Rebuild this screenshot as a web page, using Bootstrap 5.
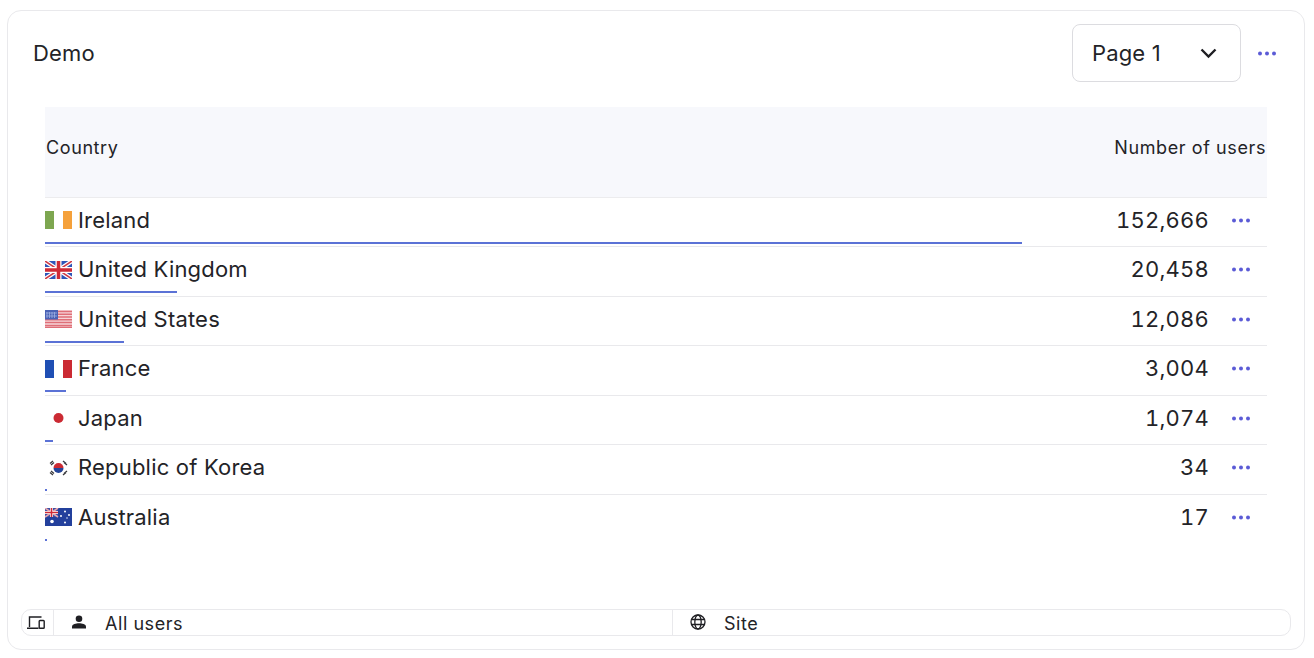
<!doctype html>
<html lang="en"><head><meta charset="utf-8"><title>Demo</title>
<link href="https://cdn.jsdelivr.net/npm/bootstrap@5.3.0/dist/css/bootstrap.min.css" rel="stylesheet">
<style>
html,body{height:658px;overflow:hidden;background:#fff}
body{font-family:Inter,"Liberation Sans",sans-serif;color:#232327;padding:10px 9px 8px 7px}
.panel{height:639.5px;border:1.5px solid #e9e9ec;border-radius:14px;padding:13px 0 12.5px 0;display:flex;flex-direction:column}
.top-bar{height:58px;padding:0 28px 0 25px}
.demo-title{font-size:22px;letter-spacing:.15px;padding-top:1px}
.head-gap{gap:17px}
.page-pick{width:169px;height:57.5px;border:1.5px solid #dcdce0;border-radius:8px;padding:0 23px 0 19px;font-size:22px;letter-spacing:.15px;background:#fff}
.dots{fill:#5b5bd6;display:block}
.grid-wrap{margin:25px 37px 0 37px}
.head-row{height:90.6px;background:#f7f8fc;font-size:18px;letter-spacing:.6px;padding:0 1px 9.6px;border-bottom:1px solid #ececee}
.data-row{height:49.5px;border-bottom:1.5px solid #e9e9ec;font-size:22px;letter-spacing:.2px}
.data-row:last-child{border-bottom:0}
.row-main{height:45.5px;padding-right:17px}
.flag-box{width:27px;height:18px;margin-right:6px;display:block;flex:none}
.num{letter-spacing:.2px;font-variant-numeric:tabular-nums;margin-right:23px}
.bar-line{height:2px;background:#5b72d6;margin-top:-1.5px}
.foot-bar{margin:auto 13px 0 13px;height:27px;border:1.5px solid #e9e9ec;border-radius:10px;font-size:18px;letter-spacing:.55px}
.foot-dev{width:32px;border-right:1.5px solid #e9e9ec;padding-right:3px}
.foot-cell{flex:1 1 0;padding-left:18px;padding-top:2px;line-height:1}
.foot-cell+.foot-cell{border-left:1.5px solid #e9e9ec;padding-left:17px}
.foot-cell svg{margin-right:19px;flex:none;margin-top:-3px}
.foot-cell+.foot-cell svg{margin-right:18px}
</style></head><body>
<div class="panel">
 <div class="top-bar d-flex align-items-center justify-content-between">
  <div class="demo-title">Demo</div>
  <div class="d-flex align-items-center head-gap">
   <div class="page-pick d-flex align-items-center justify-content-between"><span>Page 1</span>
    <svg width="17" height="11" viewBox="0 0 17 11"><path d="M1.500 1.500 8.500 8.500l7-7" fill="none" stroke="#1f1f23" stroke-width="2.400"/></svg></div>
   <svg class="dots" width="18" height="5" viewBox="0 0 18 5"><circle cx="2" cy="2.500" r="2"/><circle cx="9" cy="2.500" r="2"/><circle cx="16" cy="2.500" r="2"/></svg>
  </div>
 </div>
 <div class="grid-wrap">
  <div class="head-row d-flex align-items-center justify-content-between"><span>Country</span><span>Number of users</span></div>

  <div class="data-row">
   <div class="row-main d-flex align-items-center justify-content-between"><div class="d-flex align-items-center">
    <svg class="flag-box" viewBox="0 0 27 18"><rect width="9" height="18" fill="#7da650"/><rect x="18" width="9" height="18" fill="#f5a13b"/></svg>Ireland</div>
    <div class="d-flex align-items-center"><span class="num">152,666</span><svg class="dots" width="18" height="5" viewBox="0 0 18 5"><circle cx="2" cy="2.500" r="2"/><circle cx="9" cy="2.500" r="2"/><circle cx="16" cy="2.500" r="2"/></svg></div></div>
   <div class="bar-line" style="width:977px"></div>
  </div>

  <div class="data-row">
   <div class="row-main d-flex align-items-center justify-content-between"><div class="d-flex align-items-center">
    <svg class="flag-box" viewBox="0 0 27 18"><rect width="27" height="18" fill="#2f55b8"/><path d="M0 0 27 18M27 0 0 18" stroke="#fff" stroke-width="4"/><path d="M0 0 27 18M27 0 0 18" stroke="#cf3a45" stroke-width="1.500"/><path d="M13.500 0v18M0 9h27" stroke="#fff" stroke-width="6"/><path d="M13.500 0v18M0 9h27" stroke="#cf2a36" stroke-width="3.500"/></svg>United Kingdom</div>
    <div class="d-flex align-items-center"><span class="num">20,458</span><svg class="dots" width="18" height="5" viewBox="0 0 18 5"><circle cx="2" cy="2.500" r="2"/><circle cx="9" cy="2.500" r="2"/><circle cx="16" cy="2.500" r="2"/></svg></div></div>
   <div class="bar-line" style="width:132px"></div>
  </div>

  <div class="data-row">
   <div class="row-main d-flex align-items-center justify-content-between"><div class="d-flex align-items-center">
    <svg class="flag-box" viewBox="0 0 27 18"><rect width="27" height="18" fill="#f6d5d8"/><path d="M0 1.400h27M0 4.200h27M0 7h27M0 9.800h27M0 12.600h27M0 15.400h27M0 17.600h27" stroke="#df6f78" stroke-width="1.500"/><rect width="13" height="9.500" fill="#4a62b5"/><path d="M2 2v6M4.500 2v6M7 2v6M9.500 2v6M1 3h11M1 6h11" stroke="#9fb0e2" stroke-width=".8"/></svg>United States</div>
    <div class="d-flex align-items-center"><span class="num">12,086</span><svg class="dots" width="18" height="5" viewBox="0 0 18 5"><circle cx="2" cy="2.500" r="2"/><circle cx="9" cy="2.500" r="2"/><circle cx="16" cy="2.500" r="2"/></svg></div></div>
   <div class="bar-line" style="width:79px"></div>
  </div>

  <div class="data-row">
   <div class="row-main d-flex align-items-center justify-content-between"><div class="d-flex align-items-center">
    <svg class="flag-box" viewBox="0 0 27 18"><rect width="9" height="18" fill="#1f4fb4"/><rect x="18" width="9" height="18" fill="#cb2a33"/></svg>France</div>
    <div class="d-flex align-items-center"><span class="num">3,004</span><svg class="dots" width="18" height="5" viewBox="0 0 18 5"><circle cx="2" cy="2.500" r="2"/><circle cx="9" cy="2.500" r="2"/><circle cx="16" cy="2.500" r="2"/></svg></div></div>
   <div class="bar-line" style="width:21px"></div>
  </div>

  <div class="data-row">
   <div class="row-main d-flex align-items-center justify-content-between"><div class="d-flex align-items-center">
    <svg class="flag-box" viewBox="0 0 27 18"><circle cx="13.500" cy="9" r="5" fill="#cb2a33"/></svg>Japan</div>
    <div class="d-flex align-items-center"><span class="num">1,074</span><svg class="dots" width="18" height="5" viewBox="0 0 18 5"><circle cx="2" cy="2.500" r="2"/><circle cx="9" cy="2.500" r="2"/><circle cx="16" cy="2.500" r="2"/></svg></div></div>
   <div class="bar-line" style="width:8px"></div>
  </div>

  <div class="data-row">
   <div class="row-main d-flex align-items-center justify-content-between"><div class="d-flex align-items-center">
    <svg class="flag-box" viewBox="0 0 27 18"><path d="M13.500 4a5 5 0 0 1 5 5h-10a5 5 0 0 1 5-5" fill="#cb2a33"/><path d="M8.500 9a5 5 0 0 0 10 0z" fill="#24459a"/><path d="M5 4.500 8 2M6 6 9 3.500M18 2l3 2.500M19 3.500 22 6M5 13.500 8 16M6 12l3 2.500M21 13.500 18 16M22 12l-3 2.500" stroke="#3a3a3e" stroke-width="1.300"/></svg>Republic of Korea</div>
    <div class="d-flex align-items-center"><span class="num">34</span><svg class="dots" width="18" height="5" viewBox="0 0 18 5"><circle cx="2" cy="2.500" r="2"/><circle cx="9" cy="2.500" r="2"/><circle cx="16" cy="2.500" r="2"/></svg></div></div>
   <div class="bar-line" style="width:2px"></div>
  </div>

  <div class="data-row">
   <div class="row-main d-flex align-items-center justify-content-between"><div class="d-flex align-items-center">
    <svg class="flag-box" viewBox="0 0 27 18"><rect width="27" height="18" fill="#23409c"/><rect width="13" height="9" fill="#3a4fa5"/><path d="M0 0 13 9M13 0 0 9" stroke="#e9a6ad" stroke-width="1.600"/><path d="M6.500 0v9M0 4.500h13" stroke="#fff" stroke-width="2.800"/><path d="M6.500 0v9M0 4.500h13" stroke="#cf2a36" stroke-width="1.500"/><circle cx="7" cy="13.500" r="1.800" fill="#fff"/><circle cx="20" cy="3.500" r="1" fill="#fff"/><circle cx="20" cy="14.500" r="1" fill="#fff"/><circle cx="16" cy="8" r="1" fill="#fff"/><circle cx="24" cy="7" r="1" fill="#fff"/><circle cx="22" cy="10" r=".7" fill="#fff"/></svg>Australia</div>
    <div class="d-flex align-items-center"><span class="num">17</span><svg class="dots" width="18" height="5" viewBox="0 0 18 5"><circle cx="2" cy="2.500" r="2"/><circle cx="9" cy="2.500" r="2"/><circle cx="16" cy="2.500" r="2"/></svg></div></div>
   <div class="bar-line" style="width:2px"></div>
  </div>
 </div>

 <div class="foot-bar d-flex">
  <div class="foot-dev d-flex align-items-center justify-content-center">
   <svg width="20" height="14" viewBox="0 0 20 14" fill="none" stroke="#1f1f23" stroke-width="1.400"><path d="M15.500 1H3.500v10M1 12.300h11.500"/><rect x="13.200" y="4.500" width="5" height="7.800" rx=".8"/></svg>
  </div>
  <div class="foot-cell d-flex align-items-center">
   <svg width="14" height="14" viewBox="0 0 14 14" fill="#1f1f23"><circle cx="7" cy="3.800" r="3.300"/><path d="M0 13.500v-1.800C0 9.300 4 8.300 7 8.300s7 1 7 3.400v1.800z"/></svg>All users
  </div>
  <div class="foot-cell d-flex align-items-center">
   <svg width="16" height="16" viewBox="0 0 16 16" fill="none" stroke="#1f1f23" stroke-width="1.300"><circle cx="8" cy="8" r="7"/><ellipse cx="8" cy="8" rx="3.200" ry="7"/><path d="M1.500 5.500h13M1.500 10.500h13"/></svg>Site
  </div>
 </div>
</div>
<script src="https://cdn.jsdelivr.net/npm/bootstrap@5.3.0/dist/js/bootstrap.bundle.min.js"></script>
</body></html>
